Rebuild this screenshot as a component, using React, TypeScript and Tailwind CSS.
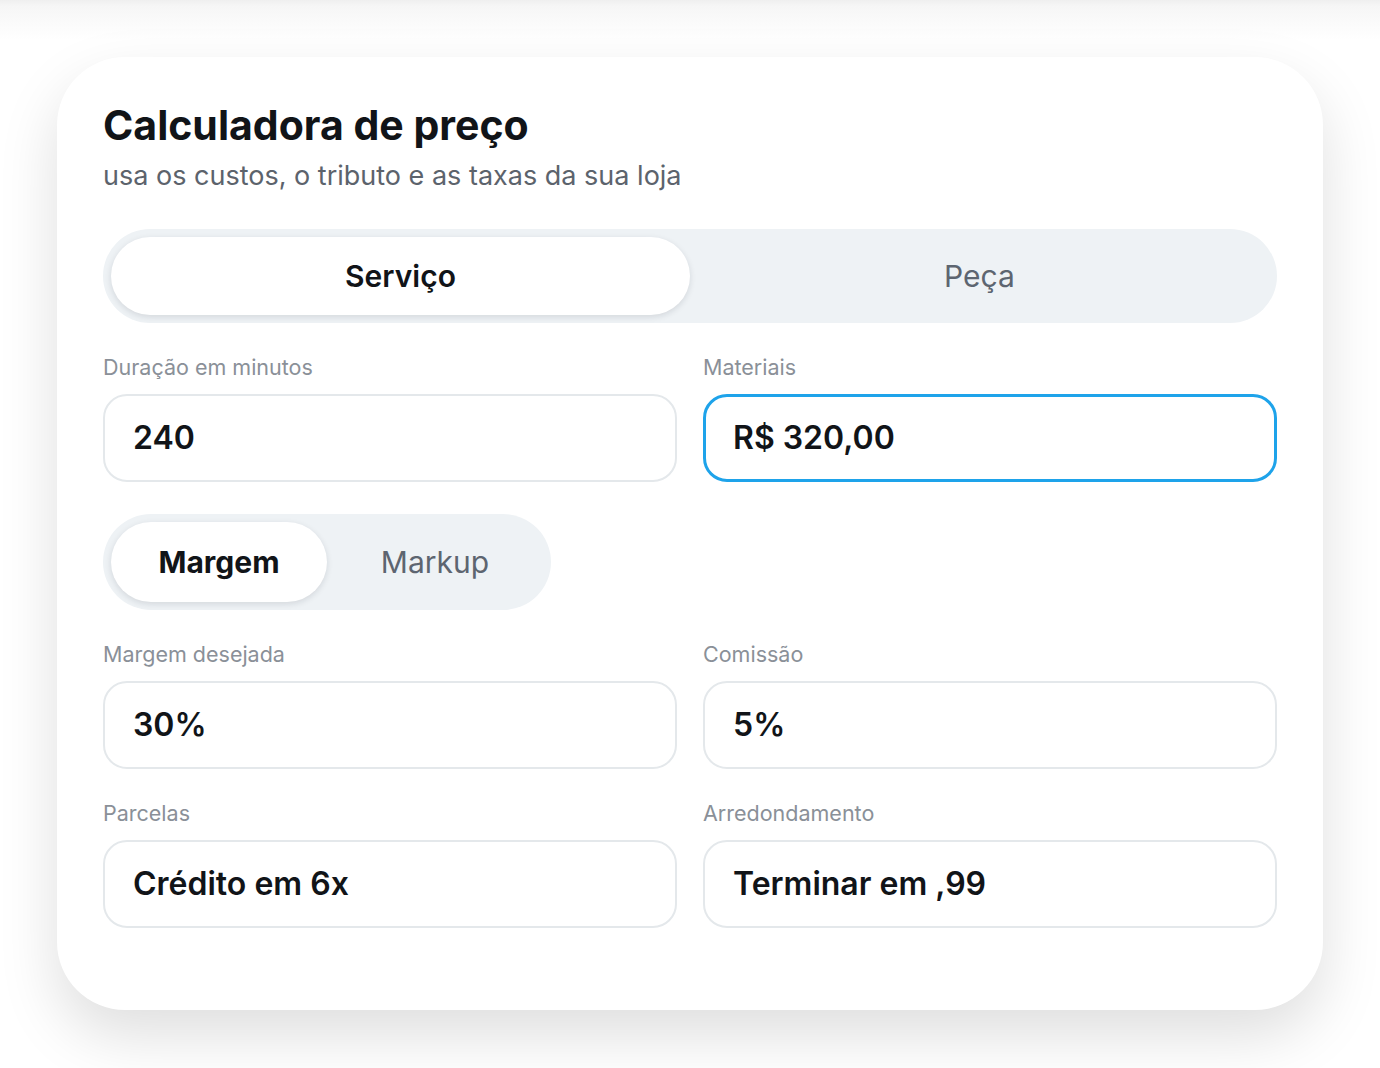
import { useState } from "react";

const font = { fontFamily: "Inter, 'Noto Sans', sans-serif" };

function Field({
  label,
  value,
  focused,
}: {
  label: string;
  value: string;
  focused?: boolean;
}) {
  return (
    <div className="flex flex-col">
      <label className="text-[21.5px] leading-[24px] text-[#8a9098] mb-[15px]">
        {label}
      </label>
      <div
        className={`h-[88px] rounded-[24px] bg-white flex items-center ${
          focused
            ? "border-[3px] border-[#1ea3ea] pl-[27px]"
            : "border-2 border-[#e4e8eb] pl-[28px]"
        }`}
      >
        <span className="text-[32px] font-semibold text-[#111418]">
          {value}
        </span>
      </div>
    </div>
  );
}

function Segmented({
  options,
  active,
  onChange,
  size,
}: {
  options: string[];
  active: number;
  onChange: (i: number) => void;
  size: "lg" | "sm";
}) {
  const lg = size === "lg";
  return (
    <div
      className={`grid grid-cols-2 p-2 rounded-full bg-[#eef2f5] ${
        lg ? "w-full h-[94px]" : "w-[448px] h-[96px]"
      }`}
    >
      {options.map((opt, i) => (
        <button
          key={opt}
          onClick={() => onChange(i)}
          className={`rounded-full text-[30px] ${
            i === active
              ? `bg-white text-[#111418] shadow-[0_2px_6px_rgba(15,23,42,0.12)] ${
                  lg ? "font-semibold" : "font-bold"
                }`
              : "text-[#5d6570] font-normal"
          }`}
        >
          {opt}
        </button>
      ))}
    </div>
  );
}

export default function App() {
  const [kind, setKind] = useState(0);
  const [mode, setMode] = useState(0);

  return (
    <div
      className="min-h-[1068px] bg-white bg-[linear-gradient(to_bottom,#efefef_0px,#f6f6f6_6px,#ffffff_40px)] pt-[57px] px-[57px] pb-[58px]"
      style={font}
    >
      <div className="bg-white rounded-[68px] shadow-[0_26px_60px_rgba(0,0,0,0.13)] pt-[44px] px-[46px] pb-[82px]">
        {/* Header */}
        <h1 className="text-[41px] leading-[48px] font-bold text-[#111418]">
          Calculadora de preço
        </h1>
        <p className="mt-[10px] text-[27px] leading-[34px] text-[#5c636c]">
          usa os custos, o tributo e as taxas da sua loja
        </p>

        <div className="mt-[36px] flex flex-col gap-[32px]">
          <Segmented
            options={["Serviço", "Peça"]}
            active={kind}
            onChange={setKind}
            size="lg"
          />

          <div className="grid grid-cols-2 gap-[26px]">
            <Field label="Duração em minutos" value="240" />
            <Field label="Materiais" value="R$ 320,00" focused />
          </div>

          <Segmented
            options={["Margem", "Markup"]}
            active={mode}
            onChange={setMode}
            size="sm"
          />

          <div className="grid grid-cols-2 gap-[26px]">
            <Field label="Margem desejada" value="30%" />
            <Field label="Comissão" value="5%" />
          </div>

          <div className="grid grid-cols-2 gap-[26px]">
            <Field label="Parcelas" value="Crédito em 6x" />
            <Field label="Arredondamento" value="Terminar em ,99" />
          </div>
        </div>
      </div>
    </div>
  );
}
